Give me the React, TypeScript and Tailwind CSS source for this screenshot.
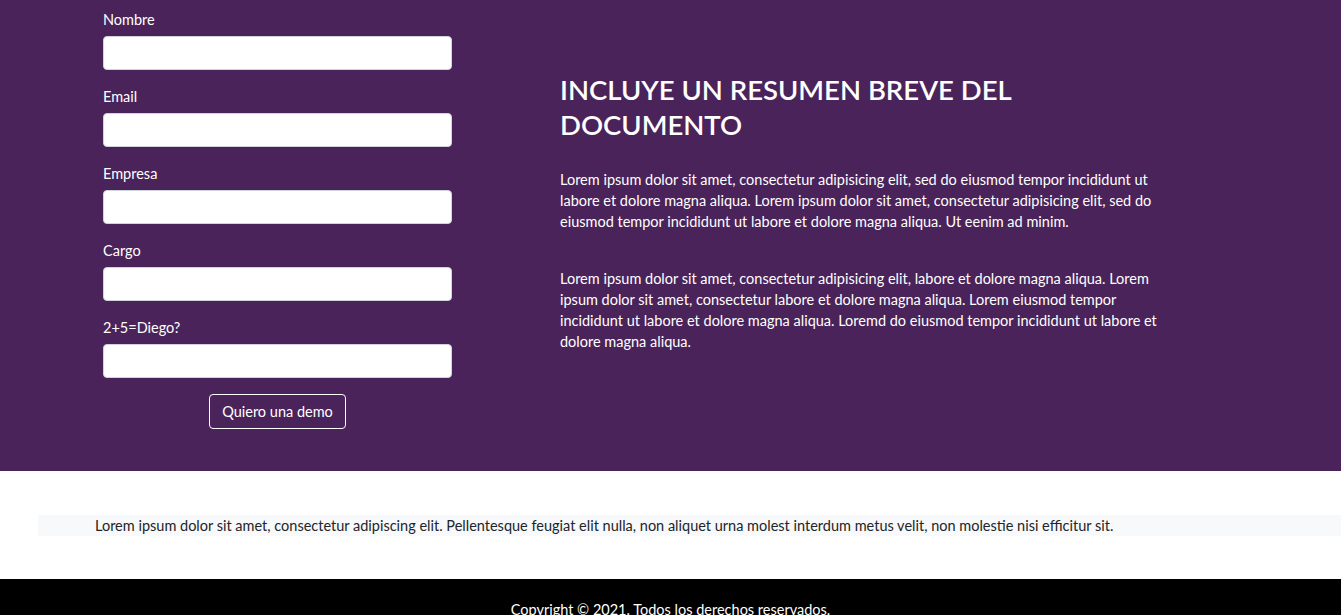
const fields = ['Nombre', 'Email', 'Empresa', 'Cargo', '2+5=Diego?']

const App = () => {
  return (
    <div className="font-['Lato','Open_Sans',sans-serif] text-[14.5px]">
      <section className="flex h-[471px] bg-[#4a235a] text-white">
        <form className="ml-[103px] w-[349px] pt-[9px]">
          {fields.map((f) => (
            <div key={f} className="mb-[16px] last:mb-[14px]">
              <label className="block leading-[21px] mb-[6px]">{f}</label>
              <input
                type="text"
                className="block w-full h-[34px] rounded-[4px] border border-[#ced4da] bg-white"
              />
            </div>
          ))}
          <div className="flex justify-center">
            <button
              type="button"
              className="h-[35px] px-[12px] rounded-[4px] border border-white leading-[21px]"
            >
              Quiero una demo
            </button>
          </div>
        </form>

        <div className="ml-[108px] w-[615px] pt-[72px]">
          <h2 className="max-w-[480px] text-[27.5px] leading-[35px] font-semibold uppercase">
            Incluye un resumen breve del documento
          </h2>
          <p className="mt-[27px] leading-[21px]">
            Lorem ipsum dolor sit amet, consectetur adipisicing elit, sed do
            eiusmod tempor incididunt ut labore et dolore magna aliqua. Lorem
            ipsum dolor sit amet, consectetur adipisicing elit, sed do eiusmod
            tempor incididunt ut labore et dolore magna aliqua. Ut eenim ad
            minim.
          </p>
          <p className="mt-[36px] leading-[21px]">
            Lorem ipsum dolor sit amet, consectetur adipisicing elit, labore et
            dolore magna aliqua. Lorem ipsum dolor sit amet, consectetur labore
            et dolore magna aliqua. Lorem eiusmod tempor incididunt ut labore et
            dolore magna aliqua. Loremd do eiusmod tempor incididunt ut labore
            et dolore magna aliqua.
          </p>
        </div>
      </section>

      <section className="bg-white pt-[44px] pb-[43px] pl-[38px]">
        <p className="bg-[#f8f9fa] pl-[57px] leading-[21px] text-[#212529]">
          Lorem ipsum dolor sit amet, consectetur adipiscing elit. Pellentesque
          feugiat elit nulla, non aliquet urna molest interdum metus velit, non
          molestie nisi efficitur sit.
        </p>
      </section>

      <footer className="bg-black pt-[20px] pb-[20px] text-center text-white">
        <p className="leading-[21px]">
          Copyright © 2021. Todos los derechos reservados.
        </p>
      </footer>
    </div>
  )
}

export default App
